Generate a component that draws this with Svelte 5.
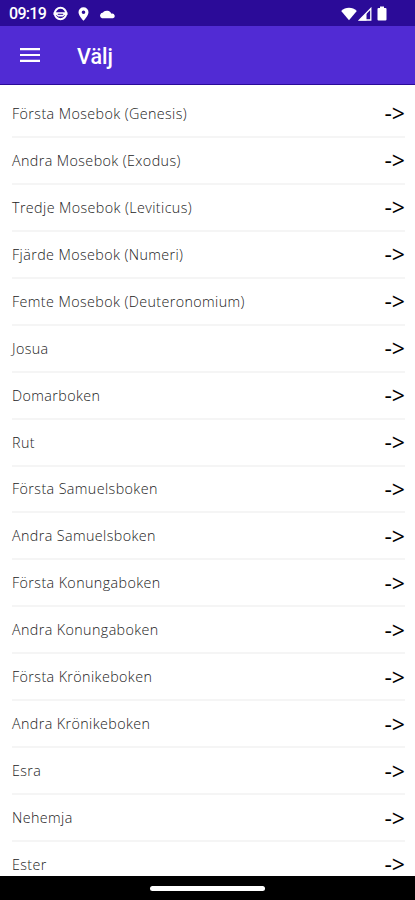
<script lang="ts">
	const books = [
		'Första Mosebok (Genesis)',
		'Andra Mosebok (Exodus)',
		'Tredje Mosebok (Leviticus)',
		'Fjärde Mosebok (Numeri)',
		'Femte Mosebok (Deuteronomium)',
		'Josua',
		'Domarboken',
		'Rut',
		'Första Samuelsboken',
		'Andra Samuelsboken',
		'Första Konungaboken',
		'Andra Konungaboken',
		'Första Krönikeboken',
		'Andra Krönikeboken',
		'Esra',
		'Nehemja',
		'Ester'
	];
</script>

<div class="screen">
	<div class="status">
		<span class="status__time">09:19</span>
		<svg class="status__app" width="15" height="15" viewBox="0 0 15 15">
			<circle cx="7.5" cy="7.5" r="5.7" fill="none" stroke="#fff" stroke-width="2" />
			<path d="M.5 6.200h14v2.800h-3L10 10.500H5L3.500 9h-3z" fill="#fff" />
			<path d="M4.800 8.300h5.400" stroke="#2b0b98" stroke-width="1" />
		</svg>
		<svg class="status__pin" width="11" height="14" viewBox="0 0 11 14">
			<path
				d="M5.500 .3A5 5 0 0 0 .5 5.300C.5 8.800 5.500 13.800 5.500 13.800S10.500 8.800 10.500 5.300A5 5 0 0 0 5.500 .3zm0 3.200a1.800 1.800 0 1 1 0 3.600 1.800 1.800 0 0 1 0-3.600z"
				fill="#fff"
			/>
		</svg>
		<svg class="status__cloud" width="16" height="10" viewBox="0 0 16 10">
			<path d="M12.500 4.700A5 5 0 0 0 4 3.500 3 3 0 0 0 3 9.300h11A2.300 2.300 0 0 0 12.500 4.700z" fill="#fff" />
		</svg>
		<svg class="status__wifi" width="16" height="14" viewBox="0 0 16 14">
			<path d="M8 13.300L.2 4Q3.500 .7 8 .7T15.800 4z" fill="#fff" />
		</svg>
		<svg class="status__signal" width="14" height="14" viewBox="0 0 14 14">
			<path d="M1.500 13L12.800 1.500V13z" fill="none" stroke="#fff" stroke-width="1.300" />
			<path d="M1 13.500L8.500 6v7.500z" fill="#fff" />
		</svg>
		<svg class="status__battery" width="10" height="15" viewBox="0 0 10 15">
			<path d="M3 .5h4V2h1.500q1 0 1 1v10.500q0 1-1 1h-7q-1 0-1-1V3q0-1 1-1H3z" fill="#fff" />
		</svg>
	</div>

	<header class="toolbar">
		<svg width="20" height="14" viewBox="0 0 20 14">
			<path d="M0 1.200h20M0 7h20M0 12.800h20" stroke="#fff" stroke-width="2.200" />
		</svg>
		<h1 class="toolbar__title">Välj</h1>
	</header>

	<ul class="books">
		{#each books as book}
			<li class="book">
				<span class="book__name">{book}</span>
				<span class="book__arrow">-&gt;</span>
			</li>
		{/each}
	</ul>

	<div class="navbar">
		<div class="navbar__handle"></div>
	</div>
</div>

<style>
	:global(body) {
		background: #fff;
	}

	.screen {
		display: flex;
		flex-direction: column;
		width: 415px;
		height: 900px;
		overflow: hidden;
		background: #fff;
	}

	.status {
		display: flex;
		align-items: center;
		flex: none;
		box-sizing: border-box;
		height: 26px;
		padding: 1px 28px 0 9px;
		background: #2b0b98;
		color: #fff;
		font: 500 16px/26px Roboto, sans-serif;
	}

	.status__time {
		width: 38px;
		letter-spacing: -0.7px;
	}

	.status__app {
		margin-left: 6px;
	}

	.status__pin {
		margin-left: 10px;
	}

	.status__cloud {
		margin-left: 10px;
	}

	.status__wifi {
		margin-left: auto;
	}

	.status__signal {
		margin-left: 1px;
	}

	.status__battery {
		margin-left: 5px;
	}

	.toolbar {
		display: flex;
		align-items: center;
		flex: none;
		box-sizing: border-box;
		height: 59px;
		padding: 0 20px;
		background: #512bd4;
		border-bottom: 1px solid #2b0b98;
	}

	.toolbar__title {
		margin: 3px 0 0 37px;
		color: #fff;
		font: 500 21.500px/28px Roboto, sans-serif;
	}

	.books {
		flex: 1;
		min-height: 0;
		margin: 0;
		padding: 6px 10px 0 12px;
		overflow: hidden;
		list-style: none;
	}

	.book {
		display: flex;
		align-items: center;
		justify-content: space-between;
		box-sizing: border-box;
		height: 46.95px;
		border-bottom: 2px solid #f5f5f5;
		font-family: 'Open Sans', sans-serif;
	}

	.book__name {
		color: #222;
		font-size: 14.3px;
		font-weight: 300;
		letter-spacing: 0.4px;
	}

	.book__arrow {
		color: #000;
		font-size: 23px;
		font-weight: 500;
		line-height: 18px;
	}

	.navbar {
		display: flex;
		align-items: center;
		justify-content: center;
		flex: none;
		height: 24px;
		background: #000;
	}

	.navbar__handle {
		width: 115px;
		height: 5px;
		border-radius: 3px;
		background: #fff;
	}
</style>
